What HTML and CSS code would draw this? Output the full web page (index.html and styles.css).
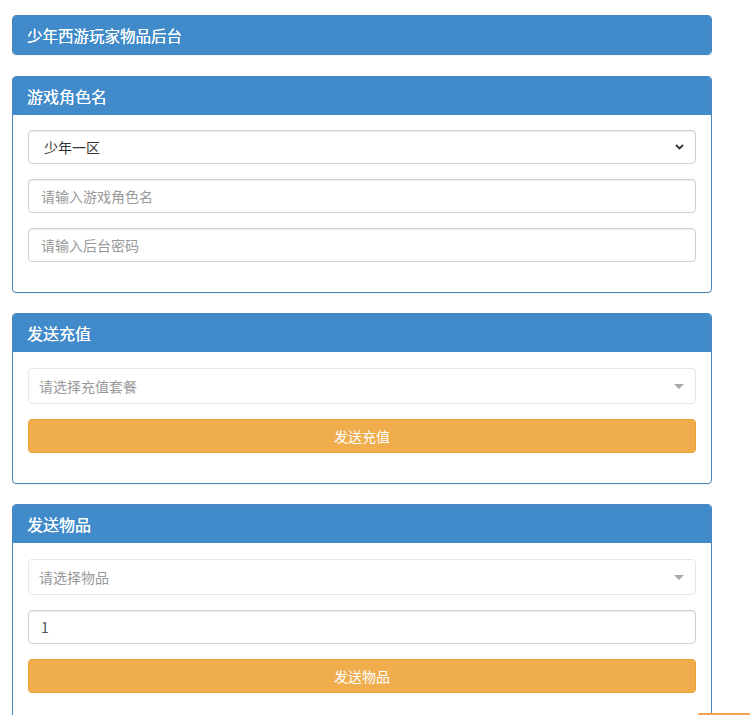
FILE: index.html
```html
<!DOCTYPE html>
<html lang="zh-CN">
<head>
<meta charset="utf-8">
<title>少年西游玩家物品后台</title>
<link rel="stylesheet" href="styles.css">
</head>
<body>
<div class="container">
  <div class="panel panel-title">
    <div class="panel-heading">少年西游玩家物品后台</div>
  </div>

  <div class="panel">
    <div class="panel-heading">游戏角色名</div>
    <div class="panel-body">
      <div class="select-wrap">
        <select class="form-control native-select">
          <option>少年一区</option>
        </select>
        <svg class="chevron" width="9" height="6" viewBox="0 0 9 6"><path d="M1 1 L4.5 4.5 L8 1" fill="none" stroke="#333" stroke-width="1.8"/></svg>
      </div>
      <input class="form-control" type="text" placeholder="请输入游戏角色名">
      <input class="form-control" type="password" placeholder="请输入后台密码">
    </div>
  </div>

  <div class="panel">
    <div class="panel-heading">发送充值</div>
    <div class="panel-body">
      <div class="select2">
        <span class="select2-placeholder">请选择充值套餐</span>
        <span class="select2-arrow"></span>
      </div>
      <button class="btn-warning" type="button">发送充值</button>
    </div>
  </div>

  <div class="panel">
    <div class="panel-heading">发送物品</div>
    <div class="panel-body">
      <div class="select2">
        <span class="select2-placeholder">请选择物品</span>
        <span class="select2-arrow"></span>
      </div>
      <input class="form-control" type="text" value="1">
      <button class="btn-warning" type="button">发送物品</button>
    </div>
  </div>
</div>
<div class="float-tab"></div>
</body>
</html>
```

FILE: styles.css
```css
html, body {
  margin: 0;
  padding: 0;
  background: #ffffff;
}
body {
  font-family: "Noto Sans CJK SC", "Liberation Sans", sans-serif;
  font-size: 14px;
  color: #333;
}
.container {
  padding: 15px 0 0 12px;
  width: 700px;
}
.panel {
  border: 1px solid #4a86bd;
  border-radius: 4px;
  margin-bottom: 20px;
  background: #fff;
  box-shadow: 0 1px 1px rgba(0,0,0,0.05);
}
.panel-title {
  margin-bottom: 21px;
}
.panel-heading {
  background: #428bca;
  color: #fff;
  font-size: 16px;
  line-height: 18px;
  padding: 10px 15px 10px 14px;
  border-radius: 3px 3px 0 0;
  text-shadow: 0 0 0.4px #fff;
}
.panel-title .panel-heading {
  border-radius: 3px;
  font-size: 15.5px;
}
.panel-body {
  padding: 15px 15px 15px 15px;
}
.form-control {
  display: block;
  box-sizing: border-box;
  width: 100%;
  height: 34px;
  margin: 0 0 15px 0;
  padding: 6px 12px;
  font-family: inherit;
  font-size: 14px;
  color: #555;
  background: #fff;
  border: 1px solid #d0d0d0;
  border-radius: 4px;
  box-shadow: inset 0 1px 1px rgba(0,0,0,0.075);
  outline: none;
}
.form-control::placeholder {
  color: #999;
}
.select-wrap {
  position: relative;
}
.native-select {
  appearance: none;
  -webkit-appearance: none;
  padding-left: 15px;
  color: #333;
}
.chevron {
  position: absolute;
  right: 12px;
  top: 14px;
  pointer-events: none;
}
.select2 {
  position: relative;
  box-sizing: border-box;
  height: 36px;
  margin: 1px 0 15px 0;
  border: 1px solid #e6e6e6;
  border-radius: 4px;
  background: #fff;
  display: flex;
  align-items: center;
  padding: 0 10px;
}
.select2-placeholder {
  color: #999;
  font-size: 14px;
}
.select2-arrow {
  position: absolute;
  right: 11px;
  top: 15px;
  width: 0;
  height: 0;
  border-left: 5px solid transparent;
  border-right: 5px solid transparent;
  border-top: 5px solid #aaa;
}
.btn-warning {
  display: block;
  box-sizing: border-box;
  width: 100%;
  height: 34px;
  margin: 0 0 15px 0;
  padding: 0;
  font-family: inherit;
  font-size: 14px;
  color: #fff;
  background: #f0ad4e;
  border: 1px solid #eea236;
  border-radius: 4px;
  cursor: pointer;
}
.float-tab {
  position: fixed;
  left: 697px;
  top: 713px;
  width: 70px;
  height: 30px;
  background: #f0a050;
  border-radius: 4px 0 0 0;
}
```
